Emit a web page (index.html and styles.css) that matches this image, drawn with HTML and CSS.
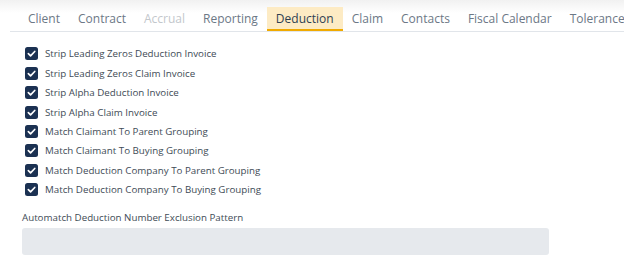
FILE: index.html
```html
<!DOCTYPE html>
<html>
<head>
<meta charset="utf-8">
<link rel="stylesheet" href="styles.css">
</head>
<body>
<div class="page">
  <nav class="tabs">
    <span class="tab">Client</span>
    <span class="tab">Contract</span>
    <span class="tab disabled">Accrual</span>
    <span class="tab">Reporting</span>
    <span class="tab active">Deduction</span>
    <span class="tab">Claim</span>
    <span class="tab">Contacts</span>
    <span class="tab">Fiscal Calendar</span>
    <span class="tab">Tolerance</span>
  </nav>
  <div class="content">
    <ul class="checks">
      <li><span class="box"><svg viewBox="0 0 14 14"><path d="M3.6 7.2 L6 9.5 L10.5 4.8"/></svg></span>Strip Leading Zeros Deduction Invoice</li>
      <li><span class="box"><svg viewBox="0 0 14 14"><path d="M3.6 7.2 L6 9.5 L10.5 4.8"/></svg></span>Strip Leading Zeros Claim Invoice</li>
      <li><span class="box"><svg viewBox="0 0 14 14"><path d="M3.6 7.2 L6 9.5 L10.5 4.8"/></svg></span>Strip Alpha Deduction Invoice</li>
      <li><span class="box"><svg viewBox="0 0 14 14"><path d="M3.6 7.2 L6 9.5 L10.5 4.8"/></svg></span>Strip Alpha Claim Invoice</li>
      <li><span class="box"><svg viewBox="0 0 14 14"><path d="M3.6 7.2 L6 9.5 L10.5 4.8"/></svg></span>Match Claimant To Parent Grouping</li>
      <li><span class="box"><svg viewBox="0 0 14 14"><path d="M3.6 7.2 L6 9.5 L10.5 4.8"/></svg></span>Match Claimant To Buying Grouping</li>
      <li><span class="box"><svg viewBox="0 0 14 14"><path d="M3.6 7.2 L6 9.5 L10.5 4.8"/></svg></span>Match Deduction Company To Parent Grouping</li>
      <li><span class="box"><svg viewBox="0 0 14 14"><path d="M3.6 7.2 L6 9.5 L10.5 4.8"/></svg></span>Match Deduction Company To Buying Grouping</li>
    </ul>
    <div class="field">
      <label class="field-label">Automatch Deduction Number Exclusion Pattern</label>
      <div class="input"></div>
    </div>
  </div>
</div>
</body>
</html>
```
FILE: styles.css
```css
html, body {
  margin: 0;
  padding: 0;
  background: #fff;
}
body {
  font-family: "Open Sans", "Liberation Sans", sans-serif;
  width: 624px;
  height: 275px;
  overflow: hidden;
  background: linear-gradient(to right, #f4f4f4 0, #fff 7px);
}
.page {
  height: 275px;
  background: linear-gradient(to bottom, #f1f1f1 0, #fff 13px);
  padding-left: 10px;
}
.tabs {
  display: flex;
  padding-left: 9px;
  padding-top: 7px;
  border-bottom: 1px solid #e1e5ea;
  white-space: nowrap;
}
.tab {
  font-size: 12px;
  line-height: 24px;
  height: 24px;
  padding: 0 9px;
  color: #6c7886;
}
.tab.disabled { color: #c3c7cc; }
.tab.active {
  background: #fdebc4;
  color: #2e3f52;
  box-shadow: inset 0 -2px 0 #f0aa00;
}
.content {
  padding-left: 12px;
  padding-top: 12px;
}
.checks {
  list-style: none;
  margin: 0;
  padding: 0 0 0 3px;
}
.checks li {
  display: flex;
  align-items: center;
  height: 19.45px;
  font-size: 9.75px;
  color: #414b56;
}
.box {
  width: 13px;
  height: 13px;
  border-radius: 2.5px;
  background: #1b3152;
  margin-right: 7px;
  display: flex;
}
.box svg {
  width: 13px;
  height: 13px;
  fill: none;
  stroke: #fff;
  stroke-width: 1.8;
  stroke-linecap: round;
  stroke-linejoin: round;
}
.field {
  margin-top: 11px;
}
.field-label {
  display: block;
  font-size: 9.75px;
  color: #414b56;
  line-height: 14px;
}
.input {
  margin-top: 3px;
  width: 527px;
  height: 27px;
  background: #e6e9ed;
  border-radius: 3px;
}
```
